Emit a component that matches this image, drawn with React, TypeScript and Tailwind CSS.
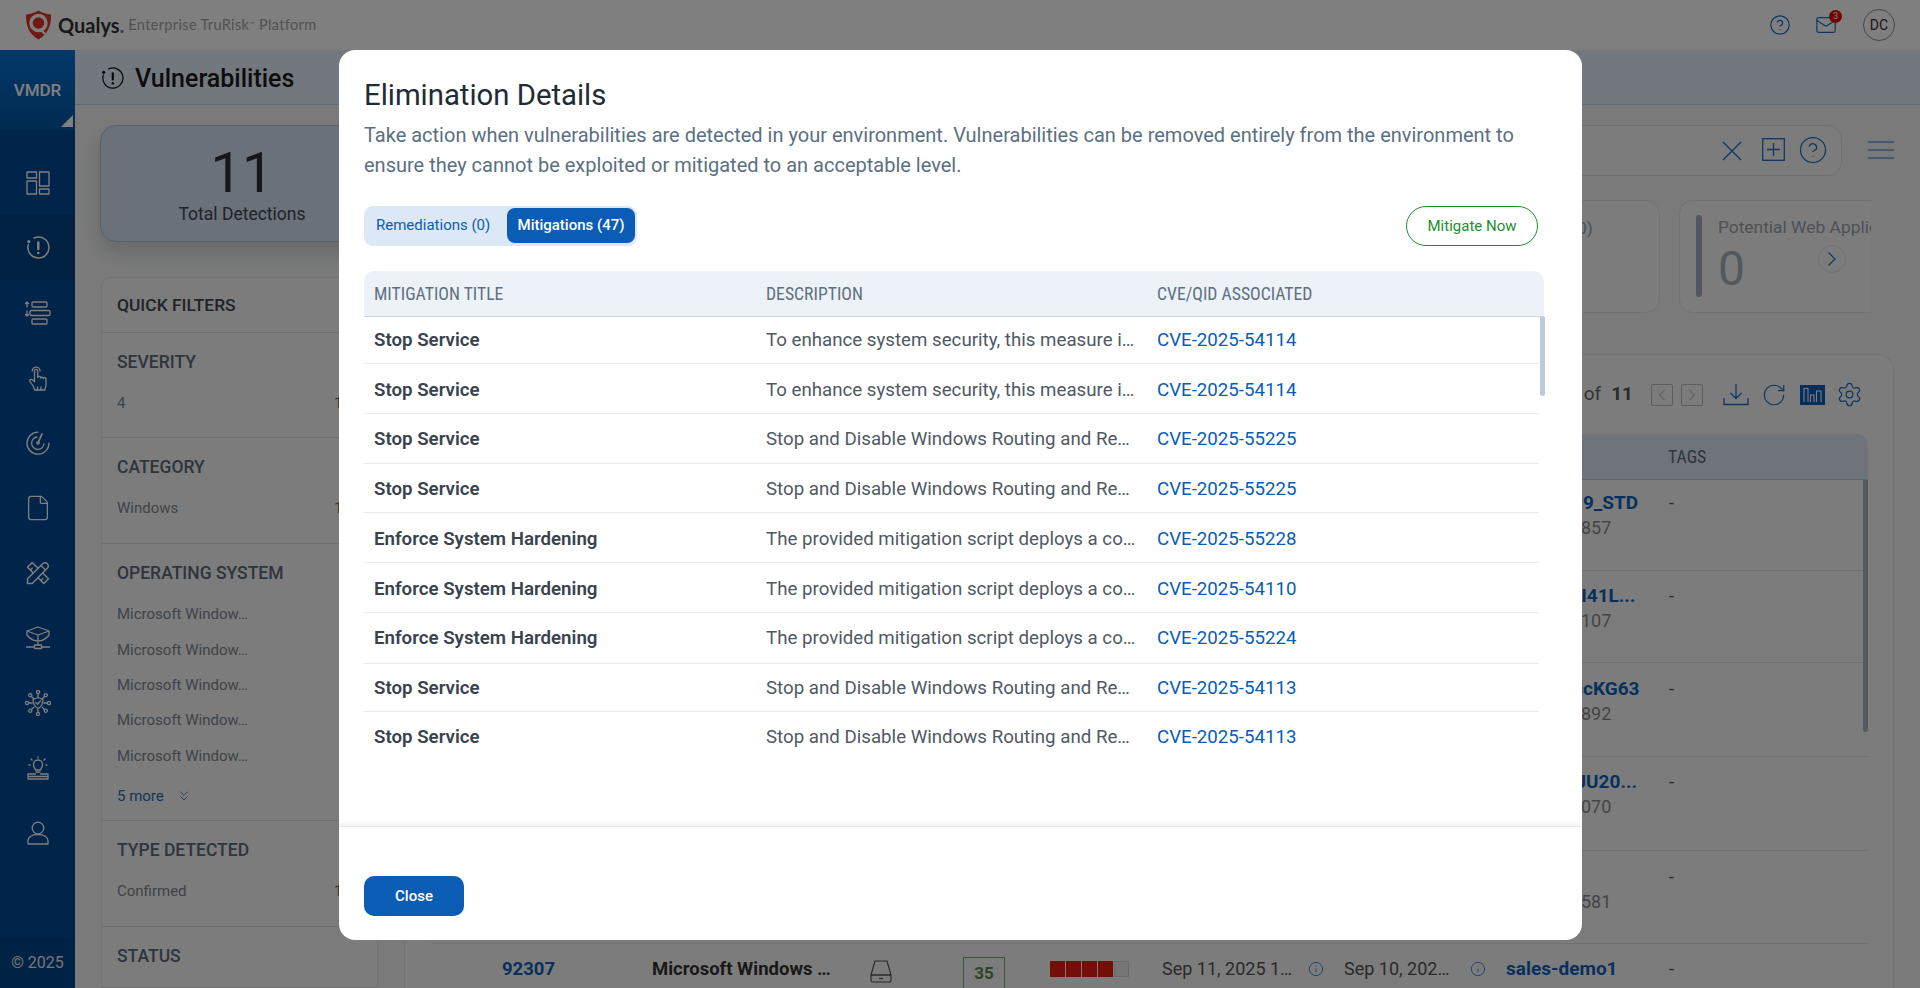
import React from "react";
import { CircleHelp, Mail, ChevronLeft, ChevronRight, RotateCw, Settings, File, Info, ChevronsDown } from "lucide-react";
import { TbTools } from "react-icons/tb";

function Logo() {
  return (
    <svg width="27" height="30" viewBox="0 0 27 30">
      <path d="M1 4.5 C6 4 10 2.5 13.5 0.5 C17 2.5 21 4 26 4.5 C26.5 16 22 25 13.5 29.5 C5 25 0.5 16 1 4.5 Z" fill="#e2342a" />
      <circle cx="13.5" cy="13" r="7.5" fill="none" stroke="#ffffff" strokeWidth="3.4" />
      <circle cx="13.5" cy="13" r="3" fill="#e2342a" />
      <path d="M16 20 L20 24" stroke="#ffffff" strokeWidth="2.4" />
    </svg>
  );
}

const sw = { fill: "none", stroke: "#ffffff", strokeWidth: 1.3, strokeLinecap: "round" as const, strokeLinejoin: "round" as const };

function VulnIcon({ size = 24, color = "#ffffff", w = 1.5 }: { size?: number; color?: string; w?: number }) {
  return (
    <svg width={size} height={size} viewBox="0 0 24 24" fill="none" stroke={color} strokeWidth={w} strokeLinecap="round">
      <path d="M2.4 8.4 A10.5 10.5 0 1 0 8 2" />
      <circle cx="2.8" cy="5.6" r="1.6" fill={color} stroke="none" />
      <path d="M12.3 6.5 V13" strokeWidth={w + 1} />
      <circle cx="12.3" cy="17" r="1.3" fill={color} stroke="none" />
    </svg>
  );
}

const sideIcons = [
  <svg key="d" width="24" height="24" viewBox="0 0 24 24" {...sw}>
    <rect x="1" y="1" width="9.5" height="6" /><rect x="1" y="10" width="9.5" height="13" />
    <rect x="13.5" y="1" width="9.5" height="14" /><rect x="13.5" y="18" width="9.5" height="5" />
  </svg>,
  <VulnIcon key="v" />,
  <svg key="s" width="26" height="24" viewBox="0 0 26 24" {...sw}>
    <rect x="7" y="1" width="15" height="5" rx="1" /><rect x="5" y="9.5" width="20" height="5" rx="1" /><rect x="7" y="18" width="15" height="5" rx="1" />
    <path d="M2 1 V6 M0.5 2.5 L2 1 L3.5 2.5 M2 10 V15 M0.5 13.5 L2 15 L3.5 13.5" />
  </svg>,
  <svg key="p" width="18" height="26" viewBox="0 0 18 26" {...sw}>
    <path d="M5.5 25 L4.5 21.5 L1 16.5 C0.2 15 2 13.6 3.4 14.8 L5.5 16.8 V6 A1.6 1.6 0 0 1 8.7 6 V12.5 A1.4 1.4 0 0 1 11.5 13 A1.4 1.4 0 0 1 14.2 13.6 A1.4 1.4 0 0 1 17 14.4 V20 L15.8 25 Z" />
    <path d="M3.2 6 A3.9 3.9 0 0 1 11 6" />
    <path d="M8.5 22 V25 M12 22 V25" />
  </svg>,
  <svg key="r" width="24" height="24" viewBox="0 0 24 24" {...sw}>
    <path d="M12 1.2 A11 11 0 1 0 23 12" /><path d="M11 6 A6.2 6.2 0 1 0 18 13" />
    <circle cx="12" cy="12" r="1.8" fill="#ffffff" stroke="none" /><path d="M12 12 L16 3" strokeWidth="1.8" />
  </svg>,
  <File key="f" size={28} strokeWidth={1.1} color="#ffffff" />,
  <TbTools key="t" size={28} color="#ffffff" style={{ strokeWidth: 1.2 }} />,
  <svg key="b" width="24" height="24" viewBox="0 0 24 24" {...sw}>
    <path d="M12 1 L23 5 L12 9 L1 5 Z M1 5 V9 C4 13 8 15 12 15 C16 15 20 13 23 9 V5 M12 9 V15 M12 15 V19" />
    <rect x="8.5" y="19" width="7" height="3.5" /><path d="M0.5 21 H8.5 M15.5 21 H23.5" />
  </svg>,
  <svg key="n" width="26" height="26" viewBox="0 0 26 26" {...sw}>
    {[0, 45, 90, 135, 180, 225, 270, 315].map((a) => (
      <g key={a} transform={`rotate(${a} 13 13)`}>
        <path d="M13 7 V3.5" /><circle cx="13" cy="2" r="1.6" />
      </g>
    ))}
    <path d="M13 7.5 L18 9.5 C18 14 16 17 13 18.5 C10 17 8 14 8 9.5 Z" />
    <path d="M10.8 12.5 L12.5 14.2 L15.5 11" />
  </svg>,
  <svg key="l" width="22" height="24" viewBox="0 0 22 24" {...sw}>
    <path d="M8.5 14 C8 12 6.5 11.5 6.5 8.5 A4.5 4.5 0 0 1 15.5 8.5 C15.5 11.5 14 12 13.5 14 Z M9 16 H13" />
    <path d="M11 1 V2 M4 3 L5 4 M18 3 L17 4 M2 9 H3 M19 9 H20" />
    <path d="M1 23 V18 H8.5 M13.5 18 H21 V23 H1 M1 20.5 H21" />
  </svg>,
  <svg key="u" width="22" height="24" viewBox="0 0 22 24" {...sw}>
    <circle cx="11" cy="7" r="5.8" /><path d="M1 23 V20 C1 16 5 13.5 11 13.5 C17 13.5 21 16 21 20 V23 Z" />
  </svg>,
];

const filterSections = [
  { t: "SEVERITY", h: "h-[105px]", items: ["4"], n: true },
  { t: "CATEGORY", h: "h-[106px]", items: ["Windows"], n: true },
  { t: "OPERATING SYSTEM", h: "h-[277px]", items: ["Microsoft Window…", "Microsoft Window…", "Microsoft Window…", "Microsoft Window…", "Microsoft Window…"], n: false, more: true },
  { t: "TYPE DETECTED", h: "h-[106px]", items: ["Confirmed"], n: true },
  { t: "STATUS", h: "h-[61px]", items: [], n: false },
];

const tableRows = [
  { h: "h-[91px] pt-[11px]", host: "WIN-2K19_STD", ip: "10.20.30.857" },
  { h: "h-[92px] pt-[13px]", host: "WDESKTI41L...", ip: "10.20.30.107" },
  { h: "h-[94px] pt-[14px]", host: "WIN10sccKG63", ip: "10.20.30.892" },
  { h: "h-[94px] pt-[13px]", host: "WIN10XJU20...", ip: "10.20.30.070" },
  { h: "h-[93px] pt-[14px]", host: "\u00a0", ip: "10.20.30.581" },
  { h: "h-[60px] pt-[13px]", host: "sales-demo1", ip: "" },
];

const modalRows = [
  ["Stop Service", "To enhance system security, this measure implements service hardening", "CVE-2025-54114", "h-[47px]"],
  ["Stop Service", "To enhance system security, this measure implements service hardening", "CVE-2025-54114", "h-[50px] pt-[3px]"],
  ["Stop Service", "Stop and Disable Windows Routing and Remote Access Service", "CVE-2025-55225", "h-[50px] pt-[1px]"],
  ["Stop Service", "Stop and Disable Windows Routing and Remote Access Service", "CVE-2025-55225", "h-[49px] pt-[2px]"],
  ["Enforce System Hardening", "The provided mitigation script deploys a comprehensive policy", "CVE-2025-55228", "h-[50px] pt-[3px]"],
  ["Enforce System Hardening", "The provided mitigation script deploys a comprehensive policy", "CVE-2025-54110", "h-[50px] pt-[3px]"],
  ["Enforce System Hardening", "The provided mitigation script deploys a comprehensive policy", "CVE-2025-55224", "h-[51px] pt-[1px]"],
  ["Stop Service", "Stop and Disable Windows Routing and Remote Access Service", "CVE-2025-54113", "h-[48px] pt-[1px]"],
  ["Stop Service", "Stop and Disable Windows Routing and Remote Access Service", "CVE-2025-54113", "h-[50px] pt-[1px]"],
];

export default function App() {
  return (
    <div className="relative h-screen w-screen overflow-hidden bg-[#f4f5f5] font-['Roboto',sans-serif] text-[#222]">
      {/* Top bar */}
      <header className="flex h-[50px] items-center bg-white pl-[25px]">
        <Logo />
        <span className="ml-[6px] font-['Lato',sans-serif] text-[20px] font-bold leading-none text-[#333]">Qualys<span className="text-[#777]">.</span></span>
        <span className="ml-[4px] font-['Lato',sans-serif] text-[14.5px] tracking-[0.35px] text-[#a4a4a4]">Enterprise TruRisk<sup className="text-[7px]">™</sup> Platform</span>
        <div className="ml-auto flex items-center pr-[25px]">
          <CircleHelp size={22} strokeWidth={1.3} color="#1c6fc4" />
          <div className="relative ml-[24px]">
            <Mail size={22} strokeWidth={1.3} color="#1c6fc4" />
            <span className="absolute -right-[5px] -top-[4px] flex h-[13px] w-[13px] items-center justify-center rounded-full bg-[#e00a0a] text-[9px] text-white">3</span>
          </div>
          <div className="ml-[26px] flex h-[32px] w-[32px] items-center justify-center rounded-full border border-[#8a8f94] text-[14px] text-[#333]">DC</div>
        </div>
      </header>

      <div className="flex h-[938px]">
        {/* Sidebar */}
        <aside className="flex w-[75px] shrink-0 flex-col bg-[#024a94]">
          <div className="relative flex h-[80px] items-start justify-center bg-gradient-to-b from-[#0872d8] to-[#02569f] pt-[28px] text-[17px] font-medium text-white">
            VMDR
            <span className="absolute bottom-[3px] right-[2px] h-0 w-0 border-b-[12px] border-l-[12px] border-b-white border-l-transparent" />
          </div>
          <div className="h-[20px]" />
          {sideIcons.map((icon, i) => (
            <div key={i} className={`flex h-[65px] items-center justify-center ${i === 1 ? "bg-[#014285]" : ""}`}>{icon}</div>
          ))}
          <div className="mt-auto flex h-[50px] items-center justify-center bg-[#014588] text-[16px] text-white/90">© 2025</div>
        </aside>

        <main className="flex min-w-0 flex-1 flex-col">
          <div className="flex h-[55px] shrink-0 items-center border-b border-[#c5d7ee] bg-[#e6f1fd] pl-[26px] pt-[3px]">
            <VulnIcon size={23} color="#111" w={1.3} />
            <h1 className="ml-[11px] text-[25px] font-medium text-[#1a1a1a]">Vulnerabilities</h1>
          </div>

          <div className="flex min-h-0 flex-1 pl-[25px] pr-[26px]">
            {/* Left column */}
            <div className="w-[304px] shrink-0 pt-[20px]">
              <div className="flex h-[117px] w-[286px] flex-col items-center rounded-[16px] border border-[#a9c4e6] bg-[#d4e2f3] pl-[2px] pr-[4px] pt-[17px] shadow-[0_10px_20px_rgba(0,0,0,0.15)]">
                <div className="text-[56px] leading-[60px] text-[#2a2f36]">11</div>
                <div className="text-[17.5px] leading-[22px] text-[#404650]">Total Detections</div>
              </div>
              <div className="ml-[1px] mt-[35px] w-[277px] rounded-t-[10px] border border-[#e6e6e6] bg-[#f8f8f8]">
                <div className="flex h-[55px] items-center border-b border-[#dedede] pl-[15px] text-[17.4px] font-medium text-[#44484e]">QUICK FILTERS</div>
                {filterSections.map((s) => (
                  <div key={s.t} className={`border-b border-[#dedede] pl-[15px] pt-[17px] ${s.h}`}>
                    <div className="text-[17.5px] font-medium leading-[24px] text-[#5e6a78]">{s.t}</div>
                    <div className="mt-[12px]">
                      {s.items.map((it, i) => (
                        <div key={i} className="flex h-[35.3px] items-center text-[15px] text-[#7d8794]">
                          <span className="w-[217px]">{it}</span>
                          {s.n && <span className="text-[#777]">1</span>}
                        </div>
                      ))}
                    </div>
                    {s.more && (
                      <div className="mt-[11px] flex h-[24px] items-center text-[15px] text-[#2a6cb0]">
                        5 more
                        <ChevronsDown size={16} strokeWidth={1.2} className="ml-[12px]" />
                      </div>
                    )}
                  </div>
                ))}
              </div>
            </div>

            {/* Right column */}
            <div className="min-w-0 flex-1 pt-[20px]">
              <div className="flex h-[51px] items-center">
                <div className="flex h-full flex-1 items-center justify-end rounded-[14px] border border-[#e2e2e2] bg-[#f8f8f8] pr-[13px]">
                  <svg width="20" height="20" viewBox="0 0 20 20" fill="none" stroke="#1c6fc4" strokeWidth="1.3">
                    <path d="M1 1 L19 19 M19 1 L1 19" />
                  </svg>
                  <svg width="23" height="23" viewBox="0 0 23 23" fill="none" stroke="#1c6fc4" strokeWidth="1.3" className="ml-[20px] -mt-[2px]">
                    <rect x="0.7" y="0.7" width="21.6" height="21.6" /><path d="M11.5 5 V18 M5 11.5 H18" />
                  </svg>
                  <CircleHelp size={30} strokeWidth={1} color="#1c6fc4" className="ml-[13px] -mt-[2px]" />
                </div>
                <svg width="26" height="18" viewBox="0 0 26 18" fill="none" stroke="#1c6fc4" strokeWidth="1.2" className="ml-[26px] -mt-[2px]">
                  <path d="M0 1 H26 M0 9 H26 M0 17 H26" />
                </svg>
              </div>

              <div className="mr-[23px] mt-[24px] flex h-[113px] justify-end gap-[19px] overflow-hidden">
                <div className="flex w-[280px] shrink-0 rounded-[14px] border border-[#e4e4e4] bg-[#f8f8f8] pl-[16px] pt-[14px]">
                  <div className="h-[82px] w-[8px] rounded bg-[#9db0bd]" />
                  <div className="ml-[14px] whitespace-nowrap pt-[1px] text-[17.4px] leading-[24px] text-[#98a4ae]">Potentially Exploit (90)</div>
                </div>
                <div className="relative flex w-[192px] shrink-0 rounded-l-[14px] border border-r-0 border-[#e4e4e4] bg-[#f8f8f8] pl-[16px] pt-[14px]">
                  <div className="h-[82px] w-[8px] rounded bg-[#9db0bd]" />
                  <div className="ml-[16px] min-w-0 overflow-hidden">
                    <div className="whitespace-nowrap text-[17.4px] leading-[24px] text-[#98a4ae]">Potential Web Applications</div>
                    <div className="pt-[4px] text-[48px] leading-[52px] text-[#a5b2bc]">0</div>
                  </div>
                  <div className="absolute left-[138px] top-[44px] flex h-[28px] w-[28px] items-center justify-center rounded-full border border-[#e2e2e2] bg-[#f8f8f8]">
                    <ChevronRight size={24} strokeWidth={1.2} color="#1c6fc4" />
                  </div>
                </div>
              </div>

              <div className="mt-[41px] rounded-t-[16px] border border-b-0 border-[#e4e4e4] bg-[#f9f9f9] pl-[26px] pr-[25px]">
                <div className="flex h-[79px] items-center justify-end pr-[5px] text-[#555]">
                  <span className="text-[19px] text-[#666]">of</span>
                  <span className="ml-[10px] text-[19px] font-bold text-[#555]">11</span>
                  <div className="ml-[18px] flex h-[22px] w-[22px] items-center justify-center rounded-[2px] border border-[#bdbdbd]"><ChevronLeft size={20} strokeWidth={1} color="#999" /></div>
                  <div className="ml-[8px] flex h-[22px] w-[22px] items-center justify-center rounded-[2px] border border-[#bdbdbd]"><ChevronRight size={20} strokeWidth={1} color="#999" /></div>
                  <svg width="26" height="24" viewBox="0 0 26 24" fill="none" stroke="#1c6fc4" strokeWidth="1.3" className="ml-[20px]">
                    <path d="M1 15 V21.5 H25 V15 M13 1 V15 M7.5 10 L13 15.5 L18.5 10" />
                  </svg>
                  <RotateCw size={26} strokeWidth={1.1} color="#1c6fc4" className="ml-[12px]" />
                  <svg width="25" height="20" viewBox="0 0 25 20" className="ml-[13px]">
                    <rect width="25" height="20" fill="#0a5cb5" />
                    <path d="M4 17 V3.5 H8 V17 M10.5 17 V10 H14 V17 M16.5 17 V6 H21 V17" fill="none" stroke="#ffffff" strokeWidth="1.1" />
                  </svg>
                  <Settings size={27} strokeWidth={1.1} color="#1c6fc4" className="ml-[11px]" />
                </div>
                <div className="flex h-[46px] items-center rounded-t-[10px] border-b border-[#b6cde0] bg-[#dde8f2] pl-[1237px] pt-[1px] text-[17.7px] text-[#5e6b78] [font-stretch:condensed]">TAGS</div>
                <div className="relative">
                  <div className="absolute right-0 top-0 h-[252px] w-[5px] rounded-b bg-[#a9b6bf]" />
                  {tableRows.map((r, i) => (
                    <div key={i} className={`grid grid-cols-[71px_150px_214px_97px_87px_112px_182px_162px_163px_1fr] border-b border-[#e3e3e3] ${r.h}`}>
                      <div />
                      <div className="text-[18.5px] font-bold leading-[24px] text-[#0f62b8]">92307</div>
                      <div className="w-[184px] truncate text-[18.5px] font-bold leading-[24px] text-[#333]">Microsoft Windows Server</div>
                      <div className="pl-[4px] pt-[2px]">
                        <svg width="22" height="24" viewBox="0 0 22 24" fill="none" stroke="#555" strokeWidth="1.2">
                          <path d="M5 2 H17 L21 16 H1 Z" /><rect x="1" y="16" width="20" height="7" rx="1.5" /><path d="M9 19.5 H13" />
                        </svg>
                      </div>
                      <div className="flex h-[60px] w-[42px] items-start justify-center border border-[#7fa37f] pt-[3px] text-[17px] font-bold text-[#5d8a4e]">35</div>
                      <div className="mt-[4px] flex h-[16px] gap-[1px]">
                        {[0, 1, 2, 3].map((k) => <span key={k} className="h-[16px] w-[15px] bg-[#e81e10]" />)}
                        <span className="h-[16px] w-[15px] border border-[#d5d5d5] bg-[#ececec]" />
                      </div>
                      <div className="flex items-start text-[18px] leading-[24px] text-[#555]">
                        <span className="w-[136px] truncate">Sep 11, 2025 10:30</span>
                        <Info size={16} strokeWidth={1.2} color="#1c6fc4" className="ml-[10px] mt-[4px]" />
                      </div>
                      <div className="flex items-start text-[18px] leading-[24px] text-[#555]">
                        <span className="w-[109px] truncate">Sep 10, 2025 08:12</span>
                        <Info size={16} strokeWidth={1.2} color="#1c6fc4" className="ml-[17px] mt-[4px]" />
                      </div>
                      <div>
                        <div className="w-[150px] truncate text-[19px] font-bold leading-[24px] text-[#0f62b8]">{r.host}</div>
                        {r.ip && <div className="text-[18px] leading-[26px] text-[#8a8a8a]">{r.ip}</div>}
                      </div>
                      <div className="text-[18px] leading-[24px] text-[#555]">-</div>
                    </div>
                  ))}
                </div>
              </div>
            </div>
          </div>
        </main>
      </div>

      {/* Overlay */}
      <div className="absolute inset-0 bg-[rgba(0,0,0,0.5)]" />

      {/* Modal */}
      <div className="absolute left-[339px] top-[50px] flex h-[890px] w-[1243px] flex-col rounded-[16px] bg-white">
        <div className="h-[776px] shrink-0 pl-[25px] pr-[38px] pt-[26px]">
          <h2 className="text-[29.3px] leading-[38px] text-[#212b36]">Elimination Details</h2>
          <p className="mt-[6px] text-[20px] leading-[30px] text-[#5a7082]">
            Take action when vulnerabilities are detected in your environment. Vulnerabilities can be removed entirely from the environment to ensure they cannot be exploited or mitigated to an acceptable level.
          </p>
          <div className="mt-[25px] flex h-[41px] items-center justify-between pr-[6px]">
            <div className="flex h-[40px] w-[273px] items-center rounded-[9px] bg-[#dce8f5] pl-[12px] pr-[2px] text-[15px]">
              <span className="w-[131px] text-[#0a5cb5]">Remediations (0)</span>
              <span className="flex h-[35px] w-[128px] items-center justify-center rounded-[8px] bg-[#0a5cb5] font-medium text-white">Mitigations (47)</span>
            </div>
            <button className="flex h-[40px] w-[132px] items-center justify-center rounded-full border border-[#1b8f2e] pt-[1px] text-[15px] text-[#1b8f2e]">Mitigate Now</button>
          </div>
          <div className="mt-[25px] grid h-[46px] grid-cols-[392px_391px_1fr] items-center rounded-t-[10px] border-b border-[#c4d6e6] bg-[#edf2f9] pl-[10px] pt-[1px] text-[17.7px] text-[#5e7080] [font-stretch:condensed]">
            <span>MITIGATION TITLE</span>
            <span>DESCRIPTION</span>
            <span>CVE/QID ASSOCIATED</span>
          </div>
          <div className="relative">
            <div className="absolute -right-[1px] top-0 h-[79px] w-[5px] rounded-b bg-[#bccad9]" />
            {modalRows.map((r, i) => (
              <div key={i} className={`mr-[5px] grid grid-cols-[392px_391px_1fr] items-center border-b border-[#e7e9ec] pl-[10px] text-[18.7px] last:border-b-0 ${r[3]}`}>
                <span className="font-semibold text-[#38434e]">{r[0]}</span>
                <span className="w-[370px] truncate text-[#4f5964]">{r[1]}</span>
                <span className="text-[#0a5cb5]">{r[2]}</span>
              </div>
            ))}
          </div>
        </div>
        <div className="flex flex-1 items-start border-t border-[#e8e8e8] pl-[25px] pt-[49px] shadow-[0_-3px_4px_rgba(0,0,0,0.05)]">
          <button className="flex h-[40px] w-[100px] items-center justify-center rounded-[10px] bg-[#0a5cb5] text-[15px] font-medium text-white">Close</button>
        </div>
      </div>
    </div>
  );
}
